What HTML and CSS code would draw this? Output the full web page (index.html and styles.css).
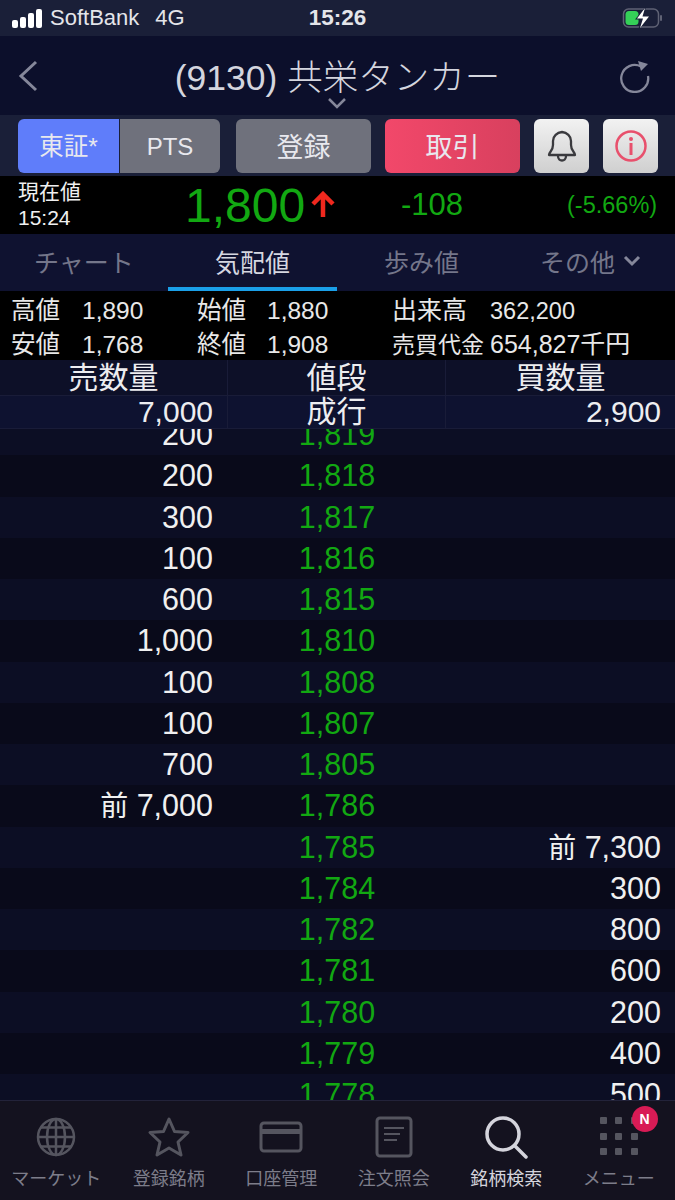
FILE: index.html
```html
<!DOCTYPE html>
<html lang="ja">
<head>
    <title>共栄タンカー</title>
    <link rel="stylesheet" href="styles.css">
</head>
<body>
    <div class="screen">
        <!-- Status bar -->
        <div class="status">
            <div class="status-left">
                <span class="signal"><i class="s1"></i><i class="s2"></i><i class="s3"></i><i class="s4"></i></span>
                <span class="carrier">SoftBank</span>
                <span class="net">4G</span>
            </div>
            <div class="clock">15:26</div>
            <div class="status-right">
                <svg width="44" height="24" viewBox="0 0 44 24">
                    <rect x="4.500" y="3" width="35" height="18" rx="5" fill="none" stroke="#5f6274" stroke-width="1.500"/>
                    <rect x="41" y="9" width="2" height="6" rx="1" fill="#5f6274"/>
                    <rect x="6.500" y="5" width="13" height="14" rx="3.500" fill="#35d058"/>
                    <path d="M27 0 L16 13.500 L22.500 13.500 L19 24 L32 9.500 L25 9.500 Z" fill="#1a1f38"/>
                    <path d="M26 2 L18 12.500 L24 12.500 L21 22 L30 10.500 L23.500 10.500 Z" fill="#fff"/>
                </svg>
            </div>
        </div>

        <!-- Title -->
        <div class="nav">
            <svg class="back" width="22" height="34" viewBox="0 0 22 34"><path d="M19 3 L4 17 L19 31" fill="none" stroke="#85879a" stroke-width="3"/></svg>
            <div class="title">(9130) 共栄タンカー</div>
            <svg class="more" width="20" height="12" viewBox="0 0 20 12"><path d="M2 2 L10 10 L18 2" fill="none" stroke="#85879a" stroke-width="2.500"/></svg>
            <svg class="reload" width="32" height="34" viewBox="0 0 32 34">
                <path d="M22 7.500 A13.500 13.500 0 1 0 29 17" fill="none" stroke="#85879a" stroke-width="2.300"/>
                <path d="M19 2 L29 5 L22 12 Z" fill="#85879a"/>
            </svg>
        </div>

        <!-- Buttons -->
        <div class="toolbar">
            <div class="market-switch">
                <div class="btn btn-tse">東証*</div>
                <div class="btn btn-pts">PTS</div>
            </div>
            <div class="btn btn-reg">登録</div>
            <div class="btn btn-trade">取引</div>
            <div class="btn btn-icon">
                <svg width="32" height="34" viewBox="0 0 32 34">
                    <path d="M3 26 C3 23 7 22 7 16 L7 12 C7 7 11 3.500 16 3 C21 3.500 25 7 25 12 L25 16 C25 22 29 23 29 26 Z" fill="none" stroke="#3a3a3e" stroke-width="2.300" stroke-linejoin="round"/>
                    <path d="M12 27 C12 33 20 33 20 27" fill="none" stroke="#3a3a3e" stroke-width="2.300"/>
                </svg>
            </div>
            <div class="btn btn-icon">
                <svg width="32" height="32" viewBox="0 0 32 32">
                    <circle cx="16" cy="16" r="14.500" fill="none" stroke="#e8506c" stroke-width="2.500"/>
                    <circle cx="16" cy="9" r="2" fill="#e8506c"/>
                    <rect x="14.500" y="13" width="3" height="12" fill="#e8506c"/>
                </svg>
            </div>
        </div>

        <!-- Current price -->
        <div class="quote">
            <div class="quote-label">現在値<br>15:24</div>
            <div class="quote-price">1,800</div>
            <svg class="quote-arrow" width="26" height="28" viewBox="0 0 26 28"><path d="M13 26 L13 4 M3 13 L13 3 L23 13" fill="none" stroke="#f0281e" stroke-width="4.500"/></svg>
            <div class="quote-diff">-108</div>
            <div class="quote-pct">(-5.66%)</div>
        </div>

        <!-- Tabs -->
        <div class="tabs">
            <div class="tab">チャート</div>
            <div class="tab tab-on">気配値</div>
            <div class="tab">歩み値</div>
            <div class="tab">その他
                <svg width="18" height="12" viewBox="0 0 18 12"><path d="M2 2 L9 9 L16 2" fill="none" stroke="#85879a" stroke-width="3"/></svg>
            </div>
        </div>

        <!-- Stats -->
        <div class="stats">
            <span>高値</span><span>1,890</span><span>始値</span><span>1,880</span><span class="vol-label">出来高</span><span class="vol">362,200</span>
            <span>安値</span><span>1,768</span><span>終値</span><span>1,908</span><span class="amt-label">売買代金</span><span class="amt">654,827千円</span>
        </div>

        <!-- Order book -->
        <div class="book-head">
            <div class="cell cell-c">売数量</div>
            <div class="cell cell-c">値段</div>
            <div class="cell cell-c">買数量</div>
        </div>
        <div class="book-head book-market">
            <div class="cell cell-r">7,000</div>
            <div class="cell cell-c">成行</div>
            <div class="cell cell-r">2,900</div>
        </div>
        <div class="book">
            <div class="book-rows">
                <div class="row"><span class="sell">200</span><span class="price">1,819</span><span class="buy"></span></div>
                <div class="row"><span class="sell">200</span><span class="price">1,818</span><span class="buy"></span></div>
                <div class="row"><span class="sell">300</span><span class="price">1,817</span><span class="buy"></span></div>
                <div class="row"><span class="sell">100</span><span class="price">1,816</span><span class="buy"></span></div>
                <div class="row"><span class="sell">600</span><span class="price">1,815</span><span class="buy"></span></div>
                <div class="row"><span class="sell">1,000</span><span class="price">1,810</span><span class="buy"></span></div>
                <div class="row"><span class="sell">100</span><span class="price">1,808</span><span class="buy"></span></div>
                <div class="row"><span class="sell">100</span><span class="price">1,807</span><span class="buy"></span></div>
                <div class="row"><span class="sell">700</span><span class="price">1,805</span><span class="buy"></span></div>
                <div class="row"><span class="sell"><em>前</em> 7,000</span><span class="price">1,786</span><span class="buy"></span></div>
                <div class="row"><span class="sell"></span><span class="price">1,785</span><span class="buy"><em>前</em> 7,300</span></div>
                <div class="row"><span class="sell"></span><span class="price">1,784</span><span class="buy">300</span></div>
                <div class="row"><span class="sell"></span><span class="price">1,782</span><span class="buy">800</span></div>
                <div class="row"><span class="sell"></span><span class="price">1,781</span><span class="buy">600</span></div>
                <div class="row"><span class="sell"></span><span class="price">1,780</span><span class="buy">200</span></div>
                <div class="row"><span class="sell"></span><span class="price">1,779</span><span class="buy">400</span></div>
                <div class="row"><span class="sell"></span><span class="price">1,778</span><span class="buy">500</span></div>
            </div>
        </div>

        <!-- Bottom menu -->
        <div class="menu">
            <div class="menu-item">
                <svg width="40" height="40" viewBox="0 0 40 40" fill="none" stroke="#55555f" stroke-width="2.500">
                    <circle cx="20" cy="20" r="18"/><ellipse cx="20" cy="20" rx="9" ry="18"/>
                    <path d="M20 2 V38 M2 20 H38 M5 10.500 H35 M5 29.500 H35"/>
                </svg>
                <span>マーケット</span>
            </div>
            <div class="menu-item">
                <svg width="44" height="42" viewBox="0 0 44 42" fill="none" stroke="#55555f" stroke-width="3" stroke-linejoin="round">
                    <path d="M22 3 L27.500 15.500 L41 16.500 L31 26 L34 39 L22 32 L10 39 L13 26 L3 16.500 L16.500 15.500 Z"/>
                </svg>
                <span>登録銘柄</span>
            </div>
            <div class="menu-item">
                <svg width="44" height="32" viewBox="0 0 44 32" fill="none" stroke="#55555f" stroke-width="3">
                    <rect x="2" y="2" width="40" height="28" rx="3"/>
                    <rect x="2" y="8" width="40" height="5" fill="#55555f" stroke="none"/>
                </svg>
                <span>口座管理</span>
            </div>
            <div class="menu-item">
                <svg width="38" height="42" viewBox="0 0 38 42" fill="none" stroke="#55555f" stroke-width="3">
                    <rect x="2" y="2" width="34" height="38" rx="3"/>
                    <path d="M9 12 H29 M9 18 H25 M9 24 H22" stroke-width="2"/>
                </svg>
                <span>注文照会</span>
            </div>
            <div class="menu-item menu-on">
                <svg width="44" height="44" viewBox="0 0 44 44" fill="none" stroke="#d4d4dc" stroke-width="3.500" stroke-linecap="round">
                    <circle cx="19" cy="19" r="16"/><path d="M31 31 L42 42"/>
                </svg>
                <span>銘柄検索</span>
            </div>
            <div class="menu-item">
                <div class="dots">
                    <i></i><i></i><i></i><i></i><i></i><i></i><i></i><i></i><i></i>
                </div>
                <b class="badge">N</b>
                <span>メニュー</span>
            </div>
        </div>
    </div>
</body>
</html>
```

FILE: styles.css
```css
* {
    box-sizing: border-box;
}
html, body {
    margin: 0;
    padding: 0;
}
.screen {
    width: 675px;
    height: 1200px;
    overflow: hidden;
    display: flex;
    flex-direction: column;
    font-family: "Liberation Sans", "Noto Sans CJK JP", sans-serif;
    color: #fff;
    background: #000;
}

/* status bar */
.status {
    height: 36px;
    flex: none;
    background: #1a1f38;
    display: grid;
    grid-template-columns: 1fr 1fr 1fr;
    align-items: center;
    padding: 0 12px;
    font-size: 22px;
    color: #e4e5ea;
}
.status-left {
    display: flex;
    align-items: center;
}
.signal {
    display: flex;
    align-items: flex-end;
    gap: 2px;
    height: 20px;
    margin-right: 8px;
}
.signal i {
    display: block;
    width: 6px;
    background: #fff;
    border-radius: 2px;
}
.s1 { height: 8px; }
.s2 { height: 11px; }
.s3 { height: 15px; }
.s4 { height: 19px; }
.net {
    margin-left: 16px;
}
.clock {
    text-align: center;
    font-size: 22.500px;
    font-weight: bold;
}
.status-right {
    display: flex;
    justify-content: flex-end;
}

/* title */
.nav {
    height: 79px;
    flex: none;
    background: #0c0f2b;
    position: relative;
    display: flex;
    align-items: center;
    justify-content: center;
}
.title {
    font-size: 35.500px;
    color: #d4d5de;
    font-weight: 300;
    margin-top: -2px;
}
.back {
    position: absolute;
    left: 17px;
    top: 23px;
}
.more {
    position: absolute;
    left: 327px;
    top: 61px;
}
.reload {
    position: absolute;
    left: 619px;
    top: 23px;
}

/* buttons */
.toolbar {
    height: 61px;
    flex: none;
    background: #1a1f38;
    display: flex;
    align-items: center;
    padding: 0 17px 0 18px;
    gap: 14px;
}
.market-switch {
    display: flex;
    margin-right: 2px;
}
.btn {
    height: 54px;
    border-radius: 6px;
    display: flex;
    align-items: center;
    justify-content: center;
    font-size: 27px;
    color: #e8e8ee;
    background: #6f717c;
}
.btn-tse {
    width: 101px;
    background: #5f7dfa;
    border-radius: 6px 0 0 6px;
    font-size: 24.500px;
    padding-bottom: 2px;
}
.btn-pts {
    width: 100px;
    margin-left: 1px;
    border-radius: 0 6px 6px 0;
    font-size: 24px;
    padding-top: 2px;
}
.btn-reg {
    width: 135px;
}
.btn-trade {
    width: 135px;
    background: linear-gradient(90deg, #f2486a, #d8405e);
}
.btn-icon {
    width: 55px;
    background: linear-gradient(#f2f2f2, #cfcfcf);
}

/* current price */
.quote {
    height: 58px;
    flex: none;
    background: #000;
    position: relative;
    display: flex;
    align-items: center;
    color: #12a812;
}
.quote-label {
    position: absolute;
    left: 18px;
    top: 3px;
    font-size: 21px;
    line-height: 26px;
    color: #f0f0f0;
}
.quote-price {
    margin-left: 185px;
    font-size: 48px;
    width: 125px;
}
.quote-arrow {
    margin-left: 0;
}
.quote-diff {
    margin-left: 65px;
    font-size: 31px;
    width: 166px;
}
.quote-pct {
    font-size: 23.500px;
}

/* tabs */
.tabs {
    height: 57px;
    flex: none;
    background: #0f1230;
    display: grid;
    grid-template-columns: 168px 169px 169px 169px;
    font-size: 25px;
    color: #74768a;
}
.tab {
    display: flex;
    align-items: center;
    justify-content: center;
    gap: 8px;
    padding-bottom: 3px;
}
.tab-on {
    color: #d6d7e0;
    border-bottom: 4px solid #1a9fe8;
    padding-bottom: 0;
}

/* stats */
.stats {
    height: 69px;
    flex: none;
    background: #000;
    display: grid;
    grid-template-columns: 71px 115px 70px 125px 98px 1fr;
    grid-auto-rows: 34px;
    align-items: baseline;
    padding: 2px 0 0 11px;
    font-size: 24.500px;
    line-height: 34px;
    color: #e8e8e8;
}
.vol, .amt {
    white-space: nowrap;
}
.vol {
    font-size: 23.500px;
}
.amt {
    font-size: 25px;
}
.vol-label {
    font-size: 25px;
}
.amt-label {
    font-size: 23px;
    white-space: nowrap;
}

/* order book */
.book-head {
    height: 35px;
    flex: none;
    display: grid;
    grid-template-columns: 228px 218px 229px;
    background: #0d1028;
    font-size: 30px;
    color: #ededf0;
}
.book-market {
    height: 34px;
    background: #0e1230;
    border-top: 1px solid #191c38;
    border-bottom: 1px solid #191c38;
}
.cell {
    display: flex;
    align-items: center;
    border-right: 1px solid #191c38;
    line-height: 1;
}
.cell:last-child {
    border-right: none;
}
.cell-c {
    justify-content: center;
}
.cell-r {
    justify-content: flex-end;
    padding-right: 14px;
}
.book {
    flex: 1;
    overflow: hidden;
    background: #090a1a;
}
.book-rows {
    margin-top: -15px;
}
.row {
    height: 41.250px;
    display: grid;
    grid-template-columns: 213px 248px 1fr;
    align-items: center;
    font-size: 30.500px;
    padding-right: 14px;
    background: #0c0e24;
    color: #f0f0f0;
}
.row:nth-child(even) {
    background: #090a1a;
}
.sell, .buy {
    text-align: right;
}
.sell em, .buy em {
    font-style: normal;
    font-size: 28px;
    line-height: 0;
}
.price {
    text-align: center;
    color: #12a812;
}

/* bottom menu */
.menu {
    height: 100px;
    flex: none;
    display: grid;
    grid-template-columns: repeat(6, 1fr);
    background: #14121f;
    border-top: 1px solid #23233a;
}
.menu-item {
    position: relative;
    display: flex;
    flex-direction: column;
    align-items: center;
    font-size: 18px;
    color: #7d7d8a;
    padding-top: 14px;
}
.menu-item svg {
    height: 44px;
    margin-bottom: 6px;
}
.menu-item span {
    position: absolute;
    top: 63px;
    white-space: nowrap;
}
.menu-on {
    color: #d4d4dc;
}
.dots {
    display: grid;
    grid-template-columns: repeat(3, 7px);
    grid-auto-rows: 7px;
    gap: 8.500px;
    margin-top: 2px;
}
.dots i {
    display: block;
    background: #55555f;
    border-radius: 1px;
}
.badge {
    position: absolute;
    left: 69px;
    top: 5px;
    width: 26px;
    height: 26px;
    border-radius: 50%;
    background: #d81b55;
    color: #fff;
    font-size: 14px;
    display: flex;
    align-items: center;
    justify-content: center;
}
```
